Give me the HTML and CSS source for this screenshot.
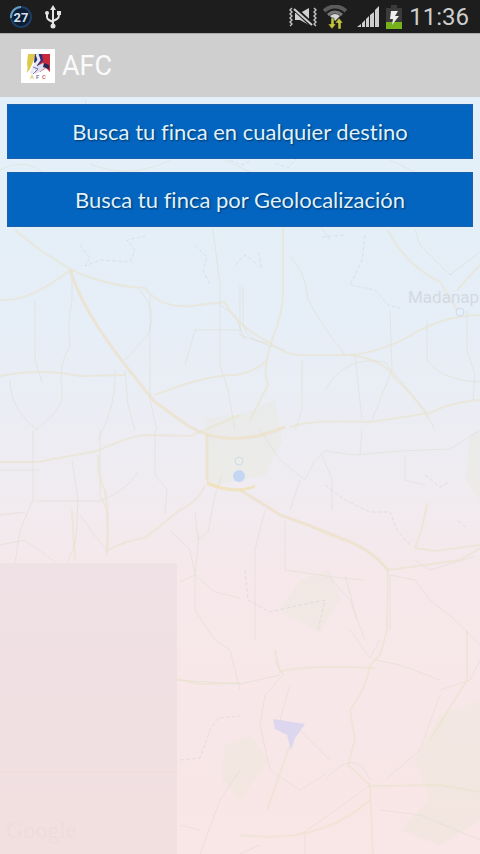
FILE: index.html
```
<!DOCTYPE html>
<html lang="es">
<head>
    <meta charset="UTF-8">
    <meta name="viewport" content="width=device-width, initial-scale=1.0">
    <link rel="stylesheet" href="styles.css">
    <title>AFC</title>
</head>
<body>
    <div class="status-bar">
        <div class="status-left">
            <svg class="battery-ring" width="24" height="24" viewBox="0 0 24 24">
                <circle cx="12" cy="12" r="10" fill="#0c1d36" stroke="#1d3f63" stroke-width="2"/>
                <path d="M2 13A10 10 0 0 1 12 2" fill="none" stroke="#6a9cc0" stroke-width="2"/>
                <text class="ring-text" x="12" y="17" text-anchor="middle">27</text>
            </svg>
            <svg width="16" height="24" viewBox="0 0 16 24" fill="none" stroke="#e4e4e4" stroke-width="2">
                <path d="M8 3V20M2 8V12Q2 14 4 15L8 17M14 8V10Q14 13 12 14L8 16"/>
                <path d="M8 0L11 5H5Z" fill="#e4e4e4" stroke="none"/>
                <circle cx="2" cy="8" r="2" fill="#e4e4e4" stroke="none"/>
                <rect x="12" y="6" width="4" height="4" fill="#e4e4e4" stroke="none"/>
                <circle cx="8" cy="21" r="2.5" fill="#e4e4e4" stroke="none"/>
            </svg>
        </div>
        <div class="status-right">
            <!-- vibrate / mute -->
            <svg width="28" height="20" viewBox="0 0 28 20">
                <path d="M3 1L1 3L3 5L1 7L3 9L1 11L3 13L1 15L3 17L1 19M25 1L27 3L25 5L27 7L25 9L27 11L25 13L27 15L25 17L27 19" fill="none" stroke="#c4c4c4" stroke-width="1.4"/>
                <path d="M6 6H11L20 1V18L11 13H6Z" fill="#d0d0d0"/>
                <path d="M5 1L23 18" stroke="#1d1d1d" stroke-width="5"/>
                <path d="M5 2L23 18" stroke="#d0d0d0" stroke-width="2"/>
            </svg>
            <!-- wifi -->
            <svg width="24" height="24" viewBox="0 0 24 24">
                <path d="M1 6Q12 -3 23 6" fill="none" stroke="#5b5b5b" stroke-width="4"/>
                <path d="M5 10Q12 4 19 10" fill="none" stroke="#777" stroke-width="3"/>
                <path d="M7 11Q12 7 17 11L12 16Z" fill="#d8d8d8"/>
                <path d="M8 13H11V19H13L9 24L5 19H8ZM15 24V18H12L16 13L20 18H18V24Z" fill="#c5c638" stroke="#1d1d1d" stroke-width=".5"/>
            </svg>
            <!-- signal -->
            <svg class="signal" width="22" height="22" viewBox="0 0 22 22" fill="#cfcfcf">
                <path d="M0 21L4 18V21ZM5 17L8 14V21H5ZM9 13L12 10V21H9ZM13 9L17 6V21H13ZM18 4L22 0V21H18Z"/>
            </svg>
            <!-- battery -->
            <svg class="battery" width="18" height="24" viewBox="0 0 18 24">
                <path d="M6 0H12V3H17V24H1V3H6Z" fill="#3b3b3b"/>
                <rect x="1" y="17" width="16" height="7" fill="#77b21d"/>
                <path d="M6 6H13L10 11H14L7 20L8 14H5Z" fill="#eee"/>
            </svg>
            <span class="clock">11:36</span>
        </div>
    </div>

    <header class="header">
        <svg class="logo" width="34" height="34" viewBox="0 0 34 34">
            <rect width="34" height="34" fill="#fff"/>
            <path d="M7 5H15L12 13L9 20L6 24Q7 18 6 14Z" fill="#dfc94b"/>
            <path d="M14 5H22V13L18 20L13 13Z" fill="#303078"/>
            <path d="M21 5H29V23L25 19L19 23L18 15L22 12Z" fill="#c82a3c"/>
            <path d="M16 5L18 11L13 18L10 25" fill="none" stroke="#e9e9f4" stroke-width="3"/>
            <path d="M22 14L27 17L20 22L14 25L14 18Z" fill="#dcdcec"/>
            <path d="M23 14L28 16V20L22 18Z" fill="#252757"/>
            <path d="M12 18L17 20L12 25" fill="none" stroke="#7775ac"/>
            <text class="logo-text" y="30"><tspan x="9" fill="#e0cd79">A</tspan><tspan x="15" fill="#7f7ba9">F</tspan><tspan x="21" fill="#cf6a76">C</tspan></text>
        </svg>
        <h1 class="title">AFC</h1>
    </header>

    <main class="content">
        <svg class="map" viewBox="0 97 480 757" preserveAspectRatio="xMidYMin slice" aria-hidden="true">
            <rect class="map-tile" x="0" y="563" width="177" height="291"/>
            <path class="tile-line" d="M0 772H177"/>
            <g class="area">
                <path d="M205 418L240 415L275 400L282 440L265 475L207 487Z"/>
                <path d="M300 580L330 570L340 600L320 632L280 610Z"/>
                <path d="M480 700L440 715L415 760L430 800L400 830L440 845L480 820Z"/>
                <path d="M225 745L250 735L268 760L240 800L222 780Z"/>
                <path d="M470 435L480 430V500L466 480Z"/>
            </g>
            <!-- small streets and rivers -->
            <g class="stream">
                <path d="M80 245L90 258L85 266L100 260L130 262L135 250L127 240L145 236M195 245L207 257L203 270L210 285M235 265L245 255L262 268L258 250M322 237L345 235M365 235L362 260L350 285L375 290L388 305L400 308"/>
                <path d="M85 100L90 118M230 160L242 165L252 160M275 163L288 168L296 159"/>
                <path d="M325 485L345 500L370 512L390 512L397 530L410 545M425 475L440 487L450 482M458 521L466 527"/>
                <path d="M180 760L200 758L210 730L218 718L240 716M245 570L248 600L270 612L300 605L325 600L318 630"/>
            </g>
            <g class="minor">
                <path d="M35 300V360L42 382M72 270V300Q67 325 70 345Q58 365 62 390Q65 410 35 430M140 290Q158 310 148 335L125 360M150 295V400L157 430M213 230L220 285V365L228 390L235 430M220 305L235 315L245 340M240 285V335L268 345M185 365L195 330H240M115 370Q117 405 98 440M125 370L128 405L135 430M10 380Q10 410 38 430"/>
                <path d="M243 285V320Q243 340 268 343M290 257Q305 270 308 300Q325 330 345 355M268 345L285 350M355 355L362 420M302 360V410L295 430M325 390Q345 355 385 362L425 410L435 430M390 310L392 370L372 420M427 320V360Q440 380 480 382M467 310V350L475 375L473 400"/>
                <path d="M33 430V500L20 530L15 563M100 430V495L107 510V555M72 460L78 500L76 540L68 562M35 501H100Q128 490 138 472M80 515L98 540L107 550M155 430V475L167 490L165 513M195 513L198 540L208 532L215 495L222 475M195 575L199 535M170 530L190 550L195 575L180 582M195 575L215 592L240 598M195 575V610L215 640L230 650L240 690"/>
                <path d="M260 430L280 460L305 480L315 460L325 451L355 455L400 451L450 449L480 430M322 455L332 480V510M405 455V480L425 485M362 430L360 455M300 480L290 510M285 520V570L340 578L365 580M265 510L255 550V640M345 575L357 620M415 560L430 570L475 556M390 575V630M390 575L415 580L430 600L455 620L480 645"/>
                <path d="M330 578L350 600L365 640M375 660L400 665L440 680M440 690L470 680L480 660M350 630L370 658L380 640M275 660L283 675L265 695L260 725L270 770L300 790L325 775M175 680L240 684L280 675M290 685L280 720L300 730L330 760M325 780Q355 745 370 780M440 695L420 750L385 780M370 785L350 800L300 835M240 854L260 845M305 834V854M380 810L420 815L480 840M240 770L220 800L200 854M200 830L180 825"/>
                <path d="M0 170Q30 155 50 180T90 220M90 164Q130 180 170 160M225 160L250 172M390 160L415 172M320 226L330 240M0 470H40M0 515L25 512M415 230L420 245L450 275L480 252M0 545L25 540L55 562"/>
            </g>
            <g class="road">
                <path d="M15 230L40 250L70 269Q105 286 145 288Q160 308 190 306L225 302Q235 325 270 343Q285 355 300 355H350Q385 352 420 330Q450 315 480 315"/>
                <path d="M0 300Q30 302 70 270M0 376Q40 368 80 376L125 375M155 395Q205 375 235 375Q255 372 268 360M283 225V290Q284 310 272 340Q262 370 268 385L250 420M388 230Q405 265 440 282L457 310M457 290L480 265"/>
                <path d="M0 462H37L97 451Q130 436 145 435L190 436L240 415M98 455Q98 480 105 490Q110 525 107 550M105 552Q125 540 145 538L180 510Q200 500 205 485M72 510L75 560"/>
                <path d="M290 427Q310 419 370 422L430 413Q450 402 480 400M350 355Q385 360 395 378Q418 400 428 418M427 503Q424 525 415 548L435 551L480 545"/>
                <path d="M388 570L387 630L380 655L370 665Q366 690 350 710L355 740L348 765L370 785L373 854M177 679L200 684L240 683M280 672Q300 665 375 668M467 630V680L430 740M267 810L290 745M388 570L410 567L460 560L480 548M240 835Q320 845 370 800M370 786L440 785L480 792M280 673L275 650"/>
            </g>
            <g class="highway">
                <path d="M70 270Q80 300 100 330T155 402L190 427Q230 450 285 427"/>
                <path d="M207 435V481M240 490Q265 505 280 515Q310 525 340 538Q370 548 388 570"/>
                <path class="ring" d="M207 483Q235 495 255 486"/>
            </g>
            <path class="lake" d="M273 719L305 724L295 738L291 750L287 735L275 729Z"/>
            <circle class="place" cx="239" cy="461" r="4"/>
            <circle class="pin" cx="239" cy="476" r="6"/>
            <circle class="place" cx="460" cy="312" r="4"/>
            <text class="city" x="408" y="303">Madanap</text>
            <text class="google" x="6" y="838">Google</text>
        </svg>
        <div class="menu">
            <button class="menu-button" type="button">Busca tu finca en cualquier destino</button>
            <button class="menu-button" type="button">Busca tu finca por Geolocalización</button>
        </div>
    </main>
</body>
</html>
```
FILE: styles.css
```
* {
    box-sizing: border-box;
}

body {
    margin: 0;
    min-height: 100vh;
    display: flex;
    flex-direction: column;
    font-family: Roboto, sans-serif;
}

svg {
    display: block;
}

.status-bar {
    display: flex;
    justify-content: space-between;
    align-items: center;
    height: 33px;
    padding: 0 11px 0 9px;
    background-color: #1d1d1d;
}

.status-left {
    display: flex;
    align-items: center;
    gap: 12px;
}

.status-right {
    display: flex;
    align-items: center;
    gap: 6px;
}

.signal {
    margin-left: 4px;
}

.ring-text {
    font-size: 13px;
    font-weight: bold;
    fill: #d5e2ee;
}

.clock {
    font-size: 24px;
    line-height: 32px;
    color: #cecece;
}

.header {
    display: flex;
    align-items: center;
    gap: 7px;
    height: 64px;
    padding: 0 21px;
    background-color: #cfcfcf;
    border-top: 1px solid #aaa;
}

.logo-text {
    font-size: 6px;
    font-weight: bold;
}

.title {
    margin: 0;
    font-size: 27px;
    font-weight: normal;
    color: #fafafa;
}

.content {
    position: relative;
    flex: 1;
    overflow: hidden;
    background: linear-gradient(#e3f0f9, #e6eef7 30%, #efecf1 50%, #f6e8eb 63%, #f9e6e6);
}

/* map sits behind the buttons */
.map {
    position: absolute;
    top: 0;
    left: 0;
    width: 100%;
    height: 100%;
}

.map path {
    stroke-linejoin: round;
}

.map-tile {
    fill: #d5c8cc;
    opacity: 0.2;
}

.tile-line {
    stroke: #efdcdd;
    stroke-width: 2;
}

.area path {
    fill: #e4e6cf;
    opacity: 0.25;
}

.stream path {
    fill: none;
    stroke: #a9b3c8;
    stroke-dasharray: 4 2;
    opacity: 0.25;
}

.minor path {
    fill: none;
    stroke: #dcdccb;
    opacity: 0.5;
}

.road path {
    fill: none;
    stroke: #e9e2cc;
    stroke-width: 2;
    opacity: 0.6;
}

.highway path {
    fill: none;
    stroke: #ecdfc6;
    stroke-width: 3;
    opacity: 0.7;
}

.highway .ring {
    stroke: #f0e0ac;
}

.lake {
    fill: #dcd6ef;
}

.place {
    fill: none;
    stroke: #cddbea;
}

.pin {
    fill: #c3d7f3;
}

.city {
    font-size: 17px;
    fill: #d3d9e2;
}

.google {
    font-family: "Liberation Serif", serif;
    font-size: 24px;
    fill: #eddcde;
}

.menu {
    position: relative;
    display: flex;
    flex-direction: column;
    gap: 13px;
    padding: 7px;
}

.menu-button {
    height: 55px;
    padding: 0 10px;
    border: 1px solid #1b62ae;
    background-color: #0465c0;
    color: #dff1ff;
    font-family: Lato, sans-serif;
    font-size: 22px;
    font-variant-ligatures: none;
    text-shadow: 1px 1px 2px rgba(0, 0, 0, 0.5);
    cursor: pointer;
}
```
